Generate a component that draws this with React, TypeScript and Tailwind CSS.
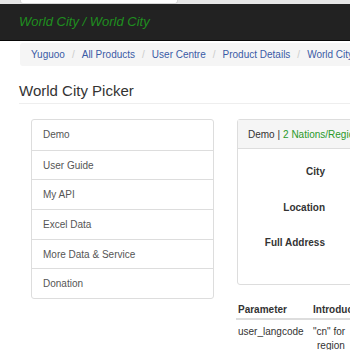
import React from 'react';

const CRUMBS = ['Yuguoo', 'All Products', 'User Centre', 'Product Details', 'World City'];
const MENU = ['Demo', 'User Guide', 'My API', 'Excel Data', 'More Data & Service', 'Donation'];
const FIELDS = ['City', 'Location', 'Full Address'];

export default function App() {
  return (
    <div className="w-[350px] h-[350px] overflow-hidden bg-white font-['Liberation_Sans',Arial,sans-serif]">
      {/* browser chrome remnant */}
      <div className="h-[4px] bg-[#e6e6e6] flex">
        <div className="ml-[20px] w-[158px] h-full bg-white rounded-b-[3px] border-x border-b border-[#d8d8d8]" />
      </div>

      {/* navbar */}
      <div className="h-[37px] bg-[#222] border-b border-[#080808] flex items-center pl-[19px]">
        <span className="italic text-[13px] text-[#1f8f1f] whitespace-nowrap">World City / World City</span>
      </div>

      {/* breadcrumb */}
      <div className="mt-[2px] ml-[20px] h-[23px] bg-[#f5f5f5] rounded-l-[3px] flex items-center pl-[11px] text-[10px] whitespace-nowrap">
        {CRUMBS.map((c, i) => (
          <React.Fragment key={c}>
            {i > 0 && <span className="px-[7px] text-[#ccc]">/</span>}
            <span className="text-[#3a5ba6]">{c}</span>
          </React.Fragment>
        ))}
      </div>

      {/* title */}
      <div className="ml-[19px] pt-[16px] pb-[3px] border-b border-[#eee] text-[15px] leading-[18px] text-[#333]">
        World City Picker
      </div>

      <div className="flex mt-[15px] pl-[31px] w-[520px]">
        {/* side menu */}
        <div className="w-[183px] shrink-0 self-start border border-[#ddd] rounded-[3px] text-[10px] text-[#555]">
          {MENU.map((m, i) => (
            <div
              key={m}
              className={`h-[29.7px] flex items-center pl-[11px] ${i > 0 ? 'border-t border-[#ddd]' : ''}`}
            >
              {m}
            </div>
          ))}
        </div>

        {/* content */}
        <div className="ml-[23px] w-[200px] shrink-0">
          <div className="border border-[#ddd] rounded-[3px]">
            <div className="h-[29px] bg-[#f5f5f5] border-b border-[#ddd] flex items-center pl-[10px] text-[10px] text-[#333] whitespace-nowrap">
              Demo | <span className="ml-[3px] text-[#2a9a2a]">2 Nations/Regions, 4 Languages</span>
            </div>
            <div className="h-[135px] pt-[5px]">
              {FIELDS.map((f) => (
                <div key={f} className="h-[35.5px] flex items-center">
                  <div className="w-[87px] text-right text-[10px] font-bold text-[#333]">{f}</div>
                </div>
              ))}
            </div>
          </div>

          {/* parameter table */}
          <div className="mt-[15px] -ml-[1px] text-[10px] text-[#333]">
            <div className="flex border-b-2 border-[#ddd] font-bold pt-[3px] pb-[2px] leading-[13px]">
              <div className="w-[75px] pl-[2px]">Parameter</div>
              <div className="pl-[2px] whitespace-nowrap">Introduction</div>
            </div>
            <div className="flex pt-[5px] leading-[13.5px]">
              <div className="w-[75px] pl-[2px]">user_langcode</div>
              <div className="pl-[2px] whitespace-nowrap">
                <div>"cn" for</div>
                <div className="pl-[4px]">region</div>
              </div>
            </div>
          </div>
        </div>
      </div>
    </div>
  );
}
